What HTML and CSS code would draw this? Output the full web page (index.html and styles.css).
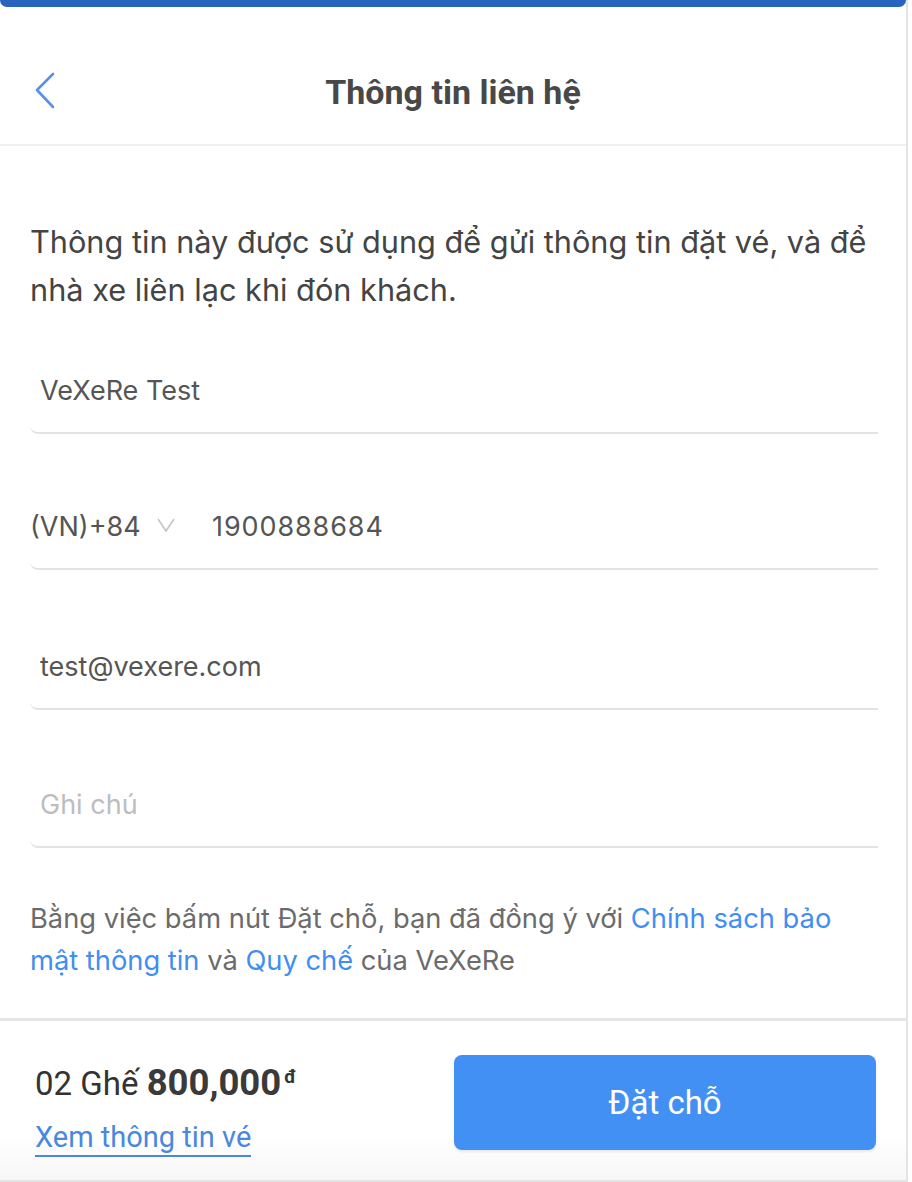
FILE: index.html
```html
<!DOCTYPE html>
<html lang="vi">
<head>
  <meta charset="UTF-8">
  <meta name="viewport" content="width=device-width, initial-scale=1.0">
  <title>Thông tin liên hệ</title>
  <link rel="stylesheet" href="styles.css">
</head>
<body>

<div class="screen">
  <div class="topbar"></div>

  <div class="header">
    <a class="back" href="#">
      <svg width="22" height="38" viewBox="0 0 22 38">
        <polyline points="18,3 2,19 18,36" fill="none" stroke="#5b8fe8" stroke-width="2.6" stroke-linecap="round" stroke-linejoin="round"/>
      </svg>
    </a>
    <h1>Thông tin liên hệ</h1>
  </div>

  <div class="content">
    <p class="intro">Thông tin này được sử dụng để gửi thông tin đặt vé, và để nhà xe liên lạc khi đón khách.</p>

    <div class="field name">
      <input type="text" value="VeXeRe Test">
    </div>

    <div class="field phone">
      <div class="country">
        <span>(VN)+84</span>
        <svg width="20" height="16" viewBox="0 0 20 16">
          <polyline points="2,2 10,14 18,2" fill="none" stroke="#c4c4c4" stroke-width="1.6"/>
        </svg>
      </div>
      <input type="text" value="1900888684">
    </div>

    <div class="field email">
      <input type="text" value="test@vexere.com">
    </div>

    <div class="field note">
      <input type="text" placeholder="Ghi chú">
    </div>

    <p class="terms">Bằng việc bấm nút Đặt chỗ, bạn đã đồng ý với <a href="#">Chính sách bảo mật thông tin</a> và <a href="#">Quy chế</a> của VeXeRe</p>
  </div>

  <div class="footer">
    <div class="summary">
      <div class="price">02 Ghế <b>800,000</b><sup>đ</sup></div>
      <a class="detail" href="#">Xem thông tin vé</a>
    </div>
    <button class="book">Đặt chỗ</button>
  </div>
</div>

</body>
</html>
```

FILE: styles.css
```css
body {
  margin: 0;
  background: #fff;
  font-family: 'Inter', 'Roboto', sans-serif;
  color: #444;
}

.screen {
  width: 906px;
  height: 1180px;
  border-right: 2px solid #e4e4e4;
  border-bottom: 2px solid #e4e4e4;
  display: flex;
  flex-direction: column;
}

.topbar {
  height: 7px;
  background-color: #2863c0;
  border-radius: 0 0 7px 7px;
}

.header {
  position: relative;
  height: 137px;
  border-bottom: 2px solid #f0f0f0;
  display: flex;
  justify-content: center;
  align-items: center;
}

.back {
  position: absolute;
  left: 35px;
  top: 64px;
  display: block;
  line-height: 0;
}

h1 {
  margin: 32px 0 0;
  font-family: 'Roboto', sans-serif;
  font-size: 34px;
  font-weight: 700;
  color: #484848;
}

.content {
  padding: 72px 28px 0 30px;
  display: flex;
  flex-direction: column;
}

.intro {
  margin: 0;
  font-size: 30.7px;
  line-height: 48px;
  color: #444;
}

.field {
  height: 84px;
  border-bottom: 2px solid #e3e3e3;
  border-radius: 0 0 0 8px;
  display: flex;
  align-items: center;
}

.name {
  margin-top: 34px;
}

.phone {
  margin-top: 50px;
}

.email {
  margin-top: 54px;
}

.note {
  margin-top: 52px;
}

.field input {
  flex: 1;
  border: none;
  outline: none;
  padding: 0 10px;
  font-family: 'Inter', sans-serif;
  font-size: 27px;
  color: #555;
  background: transparent;
}

.field input::placeholder {
  color: #bdbdbd;
}

.phone input {
  padding-left: 0;
  letter-spacing: 0.9px;
}

.country {
  display: flex;
  align-items: center;
  gap: 15px;
  width: 182px;
  font-size: 27px;
  color: #555;
}

.country svg {
  margin-top: -2px;
}

.terms {
  margin: 50px 0 0;
  font-size: 27.3px;
  line-height: 42px;
  color: #6b6b6b;
}

.terms a {
  color: #3f8ef3;
  text-decoration: none;
}

.footer {
  margin-top: auto;
  height: 159px;
  border-top: 3px solid #e6e6e6;
  background: linear-gradient(#fff 70%, #f7f7f7);
  display: flex;
  justify-content: space-between;
  align-items: center;
  padding: 0 30px 0 35px;
}

.summary {
  display: flex;
  flex-direction: column;
  gap: 16px;
  margin-top: 16px;
}

.price {
  font-family: 'Roboto', sans-serif;
  font-size: 33px;
  color: #333;
}

.price b {
  font-size: 36.5px;
  color: #3a3a3a;
}

.price sup {
  font-size: 19px;
  font-weight: 700;
  margin-left: 3px;
}

.detail {
  align-self: flex-start;
  font-family: 'Roboto', sans-serif;
  font-size: 29px;
  color: #4a88e0;
  text-decoration: none;
  border-bottom: 2px solid #4a88e0;
  padding-bottom: 1px;
}

.book {
  width: 422px;
  height: 95px;
  margin-top: 3px;
  border: none;
  border-radius: 8px;
  background-color: #4390f5;
  color: #fff;
  font-family: 'Roboto', sans-serif;
  font-size: 33px;
  box-shadow: 0 2px 3px rgba(0, 0, 0, 0.08);
  cursor: pointer;
}
```
